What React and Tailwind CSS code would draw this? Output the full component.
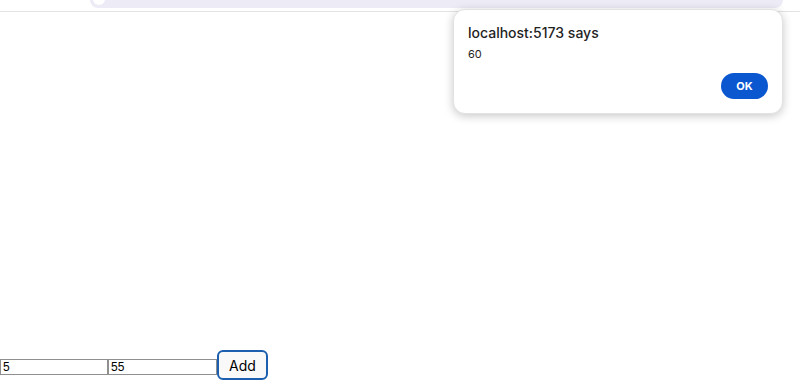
import React from "react";

function AlertDialog() {
  return (
    <div className="absolute left-[453px] top-[9px] w-[330px] h-[105px] bg-white rounded-[12px] shadow-[0_2px_10px_rgba(0,0,0,0.22)] border border-[#e2e2e2] px-[14px] pt-[14px]">
      <div className="text-[14px] leading-[18px] font-medium text-[#1f1f1f]">localhost:5173 says</div>
      <div className="mt-[5px] text-[11px] leading-[14px] text-[#1f1f1f]">60</div>
      <div className="flex justify-end mt-[12px]">
        <button className="w-[47px] h-[26px] rounded-full bg-[#0b57d0] text-white text-[11px] font-bold">
          OK
        </button>
      </div>
    </div>
  );
}

export default function App() {
  return (
    <div
      className="relative h-[392px] flex flex-col justify-between bg-white overflow-hidden"
      style={{ fontFamily: "Inter, 'Noto Sans', sans-serif" }}
    >
      <div>
        <div className="ml-[90px] mr-[17px] h-[8px] bg-[#ecebf6] rounded-b-[10px] relative">
          <div className="absolute left-[3px] -top-[7px] w-[12px] h-[12px] rounded-full bg-white" />
        </div>
        <div className="mt-[3px] h-px bg-[#e3e3e3]" />
      </div>

      <div className="flex items-center mb-[12px]" style={{ fontFamily: "'Liberation Sans', Arial, sans-serif" }}>
        <input
          type="text"
          defaultValue="5"
          className="mt-[3px] w-[108px] h-[16px] border border-[#8f8f8f] px-[2px] text-[12px] leading-[14px] text-black"
        />
        <input
          type="text"
          defaultValue="55"
          className="mt-[3px] w-[109px] h-[16px] border border-[#8f8f8f] px-[2px] text-[12px] leading-[14px] text-black"
        />
        <button
          className="w-[51px] h-[30px] rounded-[6px] border-2 border-[#1c5fae] bg-[#f9f9f9] text-[14px] text-black"
          style={{ fontFamily: "Inter, 'Noto Sans', sans-serif" }}
        >
          Add
        </button>
      </div>

      <AlertDialog />
    </div>
  );
}
